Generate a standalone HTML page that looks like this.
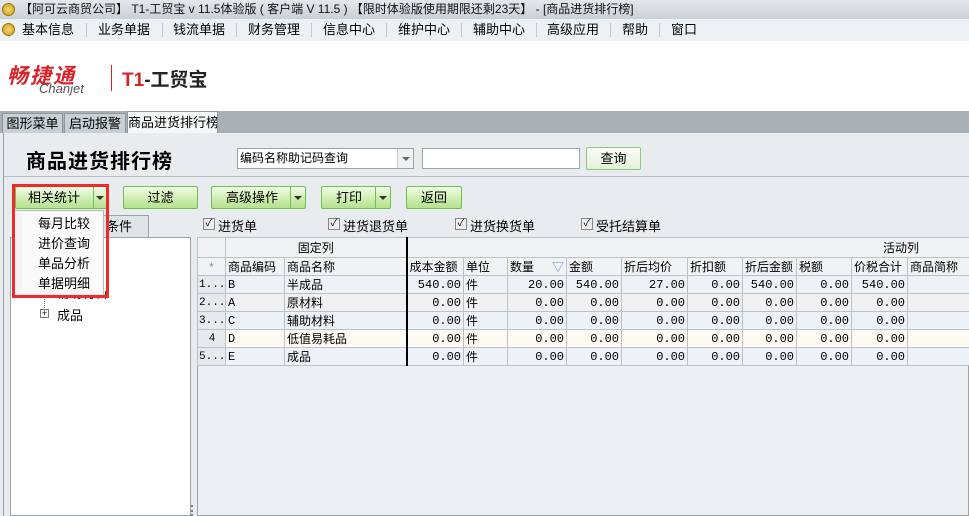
<!DOCTYPE html>
<html><head><meta charset="utf-8"><style>
*{margin:0;padding:0;box-sizing:border-box}
body{width:969px;height:516px;overflow:hidden;position:relative;font-family:"Liberation Sans","Noto Sans CJK SC",sans-serif;font-size:12px;color:#000;background:#e8ecef}
.a{position:absolute;white-space:nowrap}
.title{left:0;top:0;width:969px;height:19px;background:linear-gradient(#e4e8ec,#c9d0d6);font-size:12px;line-height:19px;padding-left:20px;color:#111}
.coin{width:13px;height:13px;border-radius:50%;background:radial-gradient(#f7d86a,#c99a1c);border:1px solid #9a7410}
.menu{left:0;top:19px;width:969px;height:22px;background:#eef1f4;line-height:22px;font-size:13px}
.menu span{position:absolute;top:0}
.menu i{position:absolute;top:4px;width:1px;height:14px;background:#c4c9ce}
.logo{left:0;top:41px;width:969px;height:70px;background:#fff}
.tabs{left:0;top:111px;width:969px;height:22px;background:#a9b1b6}
.tab{top:2px;height:20px;background:#c8d0d5;border:1px solid #8d979d;border-bottom:none;font-size:13px;text-align:center;line-height:19px;overflow:hidden}
.btn{height:23px;border:1px solid #6fbf55;background:linear-gradient(#f4fbe9,#cdeeb0 55%,#b7e28f);font-size:13px;text-align:center;line-height:21px;border-radius:2px}
.dd{border-left:1px solid #6fbf55}
.tri{position:absolute;width:0;height:0;border-left:4px solid transparent;border-right:4px solid transparent;border-top:4px solid #333}
.cb{width:12px;height:12px;border:1px solid #888;background:#eee;font-size:10px;line-height:10px;text-align:center}
table{border-collapse:collapse;table-layout:fixed;font-size:12px}
td{border:1px solid #b9c2c9;height:17px;padding:0 2px;white-space:nowrap;overflow:hidden;font-family:"Liberation Mono","Noto Sans CJK SC",monospace}
td.n{text-align:right}
.hd td{background:#f0f2f4;font-family:"Liberation Sans","Noto Sans CJK SC",sans-serif}
td.rn{background:#e6eaee;font-family:"Liberation Mono",monospace;padding:0 0 0 1px;font-size:11px}
</style></head><body>
<div class="a title">【阿可云商贸公司】 T1-工贸宝 v 11.5体验版 ( 客户端 V 11.5 ) 【限时体验版使用期限还剩23天】 - [商品进货排行榜]</div>
<div class="a coin" style="left:2px;top:3px"></div>
<div class="a menu">
<div class="a coin" style="left:2px;top:4px"></div>
<span style="left:22px">基本信息</span><i style="left:86px"></i>
<span style="left:98px">业务单据</span><i style="left:162px"></i>
<span style="left:173px">钱流单据</span><i style="left:236px"></i>
<span style="left:248px">财务管理</span><i style="left:311px"></i>
<span style="left:323px">信息中心</span><i style="left:386px"></i>
<span style="left:398px">维护中心</span><i style="left:461px"></i>
<span style="left:473px">辅助中心</span><i style="left:536px"></i>
<span style="left:547px">高级应用</span><i style="left:610px"></i>
<span style="left:622px">帮助</span><i style="left:659px"></i>
<span style="left:671px">窗口</span>
</div>
<div class="a logo">
<div class="a" style="left:7px;top:19px;font-size:21px;font-weight:bold;font-style:italic;color:#d8232a;letter-spacing:2px">畅捷通</div>
<div class="a" style="left:39px;top:40px;font-size:13px;font-style:italic;color:#555">Chanjet</div>
<div class="a" style="left:111px;top:24px;width:1px;height:26px;background:#d8232a"></div>
<div class="a" style="left:122px;top:24px;font-size:19px;font-weight:bold;color:#222"><span style="color:#d8232a">T1</span>-工贸宝</div>
</div>
<div class="a tabs">
<div class="a tab" style="left:2px;width:61px">图形菜单</div>
<div class="a tab" style="left:64px;width:62px">启动报警</div>
<div class="a tab" style="left:127px;width:91px;background:#f4f6f7;top:0;height:22px;line-height:21px">商品进货排行榜</div>
</div>
<div class="a" style="left:3px;top:133px;width:1px;height:383px;background:#9aa3a9"></div>
<div class="a" style="left:26px;top:145px;font-size:20px;font-weight:bold;letter-spacing:1px">商品进货排行榜</div>
<div class="a" style="left:4px;top:176px;width:965px;height:1px;background:#b7bfc5"></div>
<div class="a" style="left:237px;top:148px;width:177px;height:21px;background:#fff;border:1px solid #9aa3a9;font-size:12px;line-height:19px;padding-left:2px">编码名称助记码查询</div>
<div class="a" style="left:397px;top:149px;width:16px;height:19px;background:#eef0f2;border-left:1px solid #ccc"><div class="tri" style="left:4px;top:8px;border-top-color:#666"></div></div>
<div class="a" style="left:422px;top:148px;width:158px;height:21px;background:#fff;border:1px solid #9aa3a9"></div>
<div class="a btn" style="left:586px;top:147px;width:55px;border-color:#8fc77a;background:linear-gradient(#fbfdf8,#e4f1da)">查询</div>

<div class="a btn" style="left:15px;top:186px;width:93px;text-align:left;padding-left:12px">相关统计</div>
<div class="a dd" style="left:93px;top:187px;width:1px;height:21px"></div>
<div class="tri" style="left:96px;top:196px"></div>
<div class="a btn" style="left:123px;top:186px;width:75px">过滤</div>
<div class="a btn" style="left:211px;top:186px;width:95px;text-align:left;padding-left:14px">高级操作</div>
<div class="a dd" style="left:290px;top:187px;width:1px;height:21px"></div>
<div class="tri" style="left:294px;top:196px"></div>
<div class="a btn" style="left:321px;top:186px;width:70px;text-align:left;padding-left:14px">打印</div>
<div class="a dd" style="left:375px;top:187px;width:1px;height:21px"></div>
<div class="tri" style="left:379px;top:196px"></div>
<div class="a btn" style="left:406px;top:186px;width:56px">返回</div>

<div class="a" style="left:85px;top:215px;width:64px;height:23px;background:#dfe4e8;border:1px solid #9aa3a9;font-size:13px;line-height:21px;padding-left:20px">条件</div>
<div class="a" style="left:10px;top:237px;width:181px;height:279px;background:#fff;border:1px solid #9aa3a9"></div>
<div class="a" style="left:44px;top:290px;width:1px;height:18px;border-left:1px dotted #777"></div>
<div class="a" style="left:56px;top:291px;font-size:13px;color:#222;height:8px;overflow:hidden;line-height:20px"><span style="position:relative;top:-7px">辅助材料</span></div>
<div class="a" style="left:40px;top:309px;width:9px;height:9px;border:1px solid #777;font-size:9px;line-height:7px;text-align:center">+</div>
<div class="a" style="left:57px;top:305px;font-size:13px">成品</div>
<div class="a" style="left:191px;top:505px;width:2px;height:11px;border-left:2px dotted #777"></div>

<div class="a cb" style="left:203px;top:218px">✓</div><div class="a" style="left:218px;top:216px;font-size:13px">进货单</div>
<div class="a cb" style="left:328px;top:218px">✓</div><div class="a" style="left:343px;top:216px;font-size:13px">进货退货单</div>
<div class="a cb" style="left:455px;top:218px">✓</div><div class="a" style="left:470px;top:216px;font-size:13px">进货换货单</div>
<div class="a cb" style="left:581px;top:218px">✓</div><div class="a" style="left:596px;top:216px;font-size:13px">受托结算单</div>

<div class="a" style="left:197px;top:237px;width:772px;height:279px;background:#edf0f3;border:1px solid #9aa3a9"></div>
<table class="a" style="left:197px;top:237px;width:780px">
<colgroup><col style="width:28px"><col style="width:59px"><col style="width:122px"><col style="width:57px"><col style="width:44px"><col style="width:59px"><col style="width:55px"><col style="width:66px"><col style="width:55px"><col style="width:54px"><col style="width:55px"><col style="width:56px"><col style="width:70px"></colgroup>
<tr class="hd"><td style="height:20px"></td><td colspan="2" style="text-align:center;border-right:2px solid #000">固定列</td><td colspan="10" style="text-align:right;padding-right:58px">活动列</td></tr>
<tr class="hd"><td style="text-align:center;color:#999">*</td><td>商品编码</td><td style="border-right:2px solid #000">商品名称</td><td>成本金额</td><td>单位</td><td>数量 <span style="float:right;color:#6a8fd0">▽</span></td><td>金额</td><td>折后均价</td><td>折扣额</td><td>折后金额</td><td>税额</td><td>价税合计</td><td>商品简称</td></tr>
<tr style="background:#edf2f8"><td class="rn">1...</td><td>B</td><td style="border-right:2px solid #000">半成品</td><td class="n">540.00</td><td>件</td><td class="n">20.00</td><td class="n">540.00</td><td class="n">27.00</td><td class="n">0.00</td><td class="n">540.00</td><td class="n">0.00</td><td class="n">540.00</td><td></td></tr>
<tr style="background:#f1f1f1"><td class="rn">2...</td><td>A</td><td style="border-right:2px solid #000">原材料</td><td class="n">0.00</td><td>件</td><td class="n">0.00</td><td class="n">0.00</td><td class="n">0.00</td><td class="n">0.00</td><td class="n">0.00</td><td class="n">0.00</td><td class="n">0.00</td><td></td></tr>
<tr style="background:#edf2f8"><td class="rn">3...</td><td>C</td><td style="border-right:2px solid #000">辅助材料</td><td class="n">0.00</td><td>件</td><td class="n">0.00</td><td class="n">0.00</td><td class="n">0.00</td><td class="n">0.00</td><td class="n">0.00</td><td class="n">0.00</td><td class="n">0.00</td><td></td></tr>
<tr style="background:#fdfbf1"><td class="rn" style="text-align:center">4</td><td>D</td><td style="border-right:2px solid #000">低值易耗品</td><td class="n">0.00</td><td>件</td><td class="n">0.00</td><td class="n">0.00</td><td class="n">0.00</td><td class="n">0.00</td><td class="n">0.00</td><td class="n">0.00</td><td class="n">0.00</td><td></td></tr>
<tr style="background:#edf2f8"><td class="rn">5...</td><td>E</td><td style="border-right:2px solid #000">成品</td><td class="n">0.00</td><td>件</td><td class="n">0.00</td><td class="n">0.00</td><td class="n">0.00</td><td class="n">0.00</td><td class="n">0.00</td><td class="n">0.00</td><td class="n">0.00</td><td></td></tr>
</table>

<div class="a" style="left:14px;top:210px;width:90px;height:86px;background:#f4f4f4;border:1px solid #bbb"></div>
<div class="a" style="left:22px;top:212px;width:80px;height:82px;background:#fafafa"></div>
<div class="a" style="left:38px;top:214px;font-size:13px;line-height:20px">每月比较<br>进价查询<br>单品分析<br>单据明细</div>
<div class="a" style="left:12px;top:184px;width:97px;height:114px;border:3px solid #ee2b2b"></div>
</body></html>
